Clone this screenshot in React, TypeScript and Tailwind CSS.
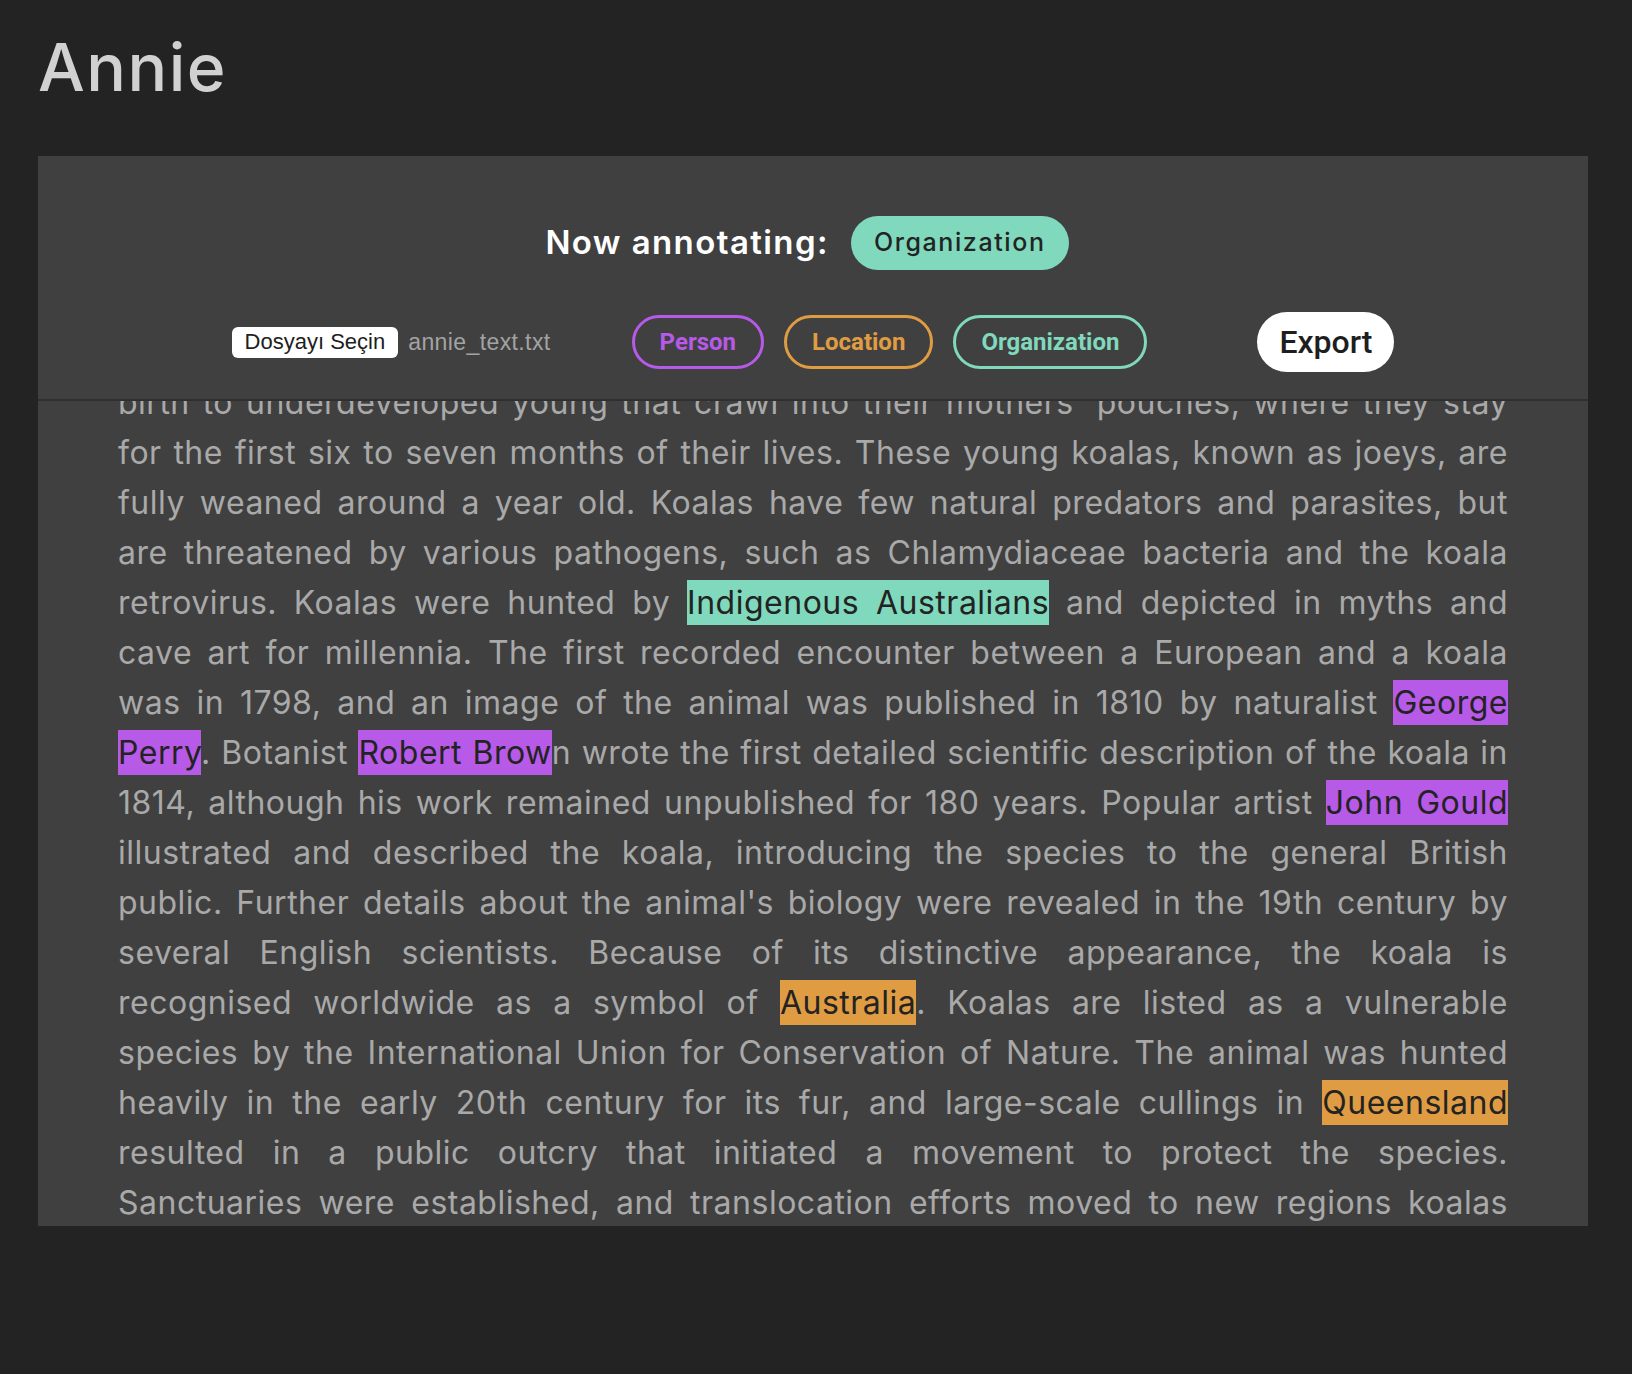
import React from "react";

type Kind = "person" | "location" | "organization";

// one segment of a line: plain text or an annotated span
type Seg = string | { text: string; kind: Kind };

const HIGHLIGHT: Record<Kind, string> = {
  person: "bg-[#b75ae8]",
  location: "bg-[#e09c42]",
  organization: "bg-[#80d9bc]",
};

// lines are kept as rendered in the annotator so the justified wrap stays put
const LINES: Seg[][] = [
  ["birth to underdeveloped young that crawl into their mothers' pouches, where they stay"],
  ["for the first six to seven months of their lives. These young koalas, known as joeys, are"],
  ["fully weaned around a year old. Koalas have few natural predators and parasites, but"],
  ["are threatened by various pathogens, such as Chlamydiaceae bacteria and the koala"],
  [
    "retrovirus. Koalas were hunted by ",
    { text: "Indigenous Australians", kind: "organization" },
    " and depicted in myths and",
  ],
  ["cave art for millennia. The first recorded encounter between a European and a koala"],
  [
    "was in 1798, and an image of the animal was published in 1810 by naturalist ",
    { text: "George", kind: "person" },
  ],
  [
    { text: "Perry", kind: "person" },
    ". Botanist ",
    { text: "Robert Brow", kind: "person" },
    "n wrote the first detailed scientific description of the koala in",
  ],
  [
    "1814, although his work remained unpublished for 180 years. Popular artist ",
    { text: "John Gould", kind: "person" },
  ],
  ["illustrated and described the koala, introducing the species to the general British"],
  ["public. Further details about the animal's biology were revealed in the 19th century by"],
  ["several English scientists. Because of its distinctive appearance, the koala is"],
  [
    "recognised worldwide as a symbol of ",
    { text: "Australia", kind: "location" },
    ". Koalas are listed as a vulnerable",
  ],
  ["species by the International Union for Conservation of Nature. The animal was hunted"],
  [
    "heavily in the early 20th century for its fur, and large-scale cullings in ",
    { text: "Queensland", kind: "location" },
  ],
  ["resulted in a public outcry that initiated a movement to protect the species."],
  ["Sanctuaries were established, and translocation efforts moved to new regions koalas"],
];

const LabelButton: React.FC<{ label: string; className: string }> = ({ label, className }) => (
  <button
    className={`h-[54px] px-[25px] rounded-full border-[3px] bg-transparent text-[24px] font-bold font-['Roboto',sans-serif] ${className}`}
  >
    {label}
  </button>
);

const App: React.FC = () => {
  return (
    <div className="min-h-[1374px] bg-[#232323] pb-[148px] font-['Inter','Noto_Sans',sans-serif]">
      {/* Title */}
      <h1 className="h-[156px] pl-[38px] pt-[22px] text-[66px] leading-[90px] font-medium text-[#d1d1d1] tracking-[1.5px]">
        Annie
      </h1>

      <div className="ml-[38px] w-[1550px] h-[1070px] bg-[#404040] flex flex-col">
        {/* Header */}
        <div className="h-[245px] shrink-0 flex flex-col items-center border-b-2 border-[#2f2f2f]">
          <div className="mt-[60px] flex items-center pr-[12px]">
            <span className="text-[33px] font-semibold text-white tracking-[1.4px]">Now annotating:</span>
            <span className="ml-[22px] h-[54px] px-[23px] rounded-full bg-[#80d9bc] text-[#232323] text-[25px] font-medium tracking-[1.6px] flex items-center">
              Organization
            </span>
          </div>

          <div className="mt-[42px] flex items-center">
            <div className="flex items-center">
              <button className="h-[31px] px-[13px] rounded-[6px] bg-white text-[#1e1e1e] text-[22px] font-['Liberation_Sans',sans-serif] leading-none">
                Dosyayı Seçin
              </button>
              <span className="ml-[10px] text-[23px] tracking-[0.4px] text-[#a3a3a3] font-['Liberation_Sans',sans-serif]">
                annie_text.txt
              </span>
            </div>

            <div className="ml-[81px] flex items-center gap-[20px]">
              <LabelButton label="Person" className="border-[#b75ae8] text-[#b75ae8]" />
              <LabelButton label="Location" className="border-[#e09c42] text-[#e09c42]" />
              <LabelButton label="Organization" className="border-[#80d9bc] text-[#80d9bc]" />
            </div>

            <button className="ml-[110px] h-[60px] px-[22px] rounded-full bg-white text-[#1e1e1e] text-[32px] font-medium font-['Roboto',sans-serif]">
              Export
            </button>
          </div>
        </div>

        {/* Annotated text, scrolled part way */}
        <div className="flex-1 overflow-hidden px-[80px]">
          <div className="-mt-[23px] text-[32px] leading-[50px] tracking-[0.5px] text-[#a9a9a9]">
            {LINES.map((line, i) => (
              <div key={i} className="h-[50px] text-justify [text-align-last:justify]">
                {line.map((seg, j) =>
                  typeof seg === "string" ? (
                    <React.Fragment key={j}>{seg}</React.Fragment>
                  ) : (
                    <span key={j} className={`${HIGHLIGHT[seg.kind]} text-[#232323] py-[3px]`}>
                      {seg.text}
                    </span>
                  )
                )}
              </div>
            ))}
          </div>
        </div>
      </div>
    </div>
  );
};

export default App;
